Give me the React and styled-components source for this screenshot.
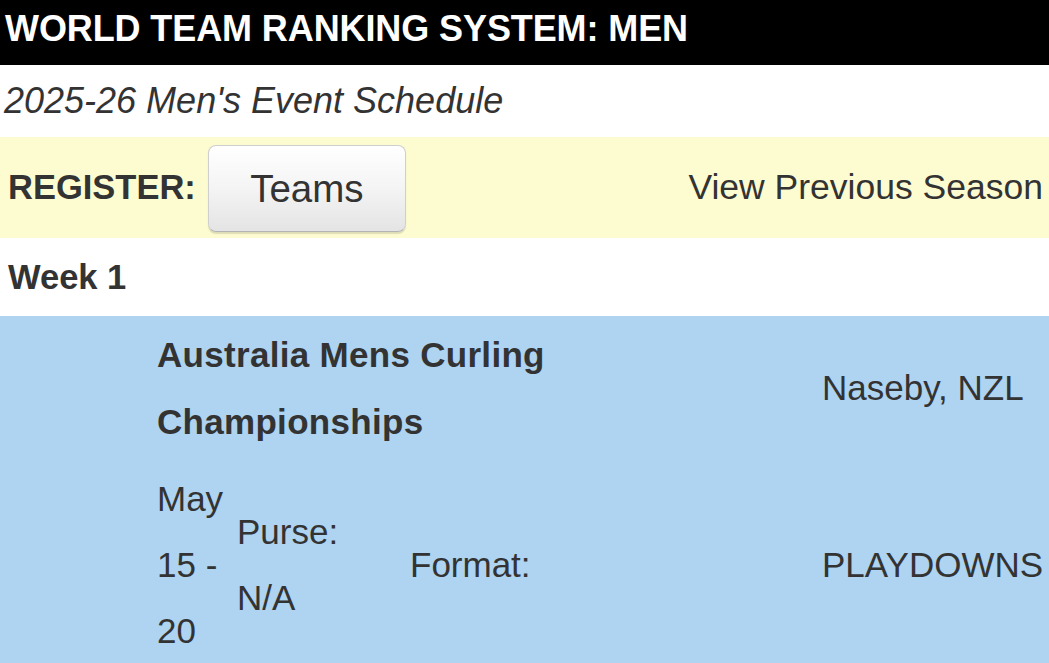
import React from 'react';
import styled, { createGlobalStyle } from 'styled-components';

const GlobalStyle = createGlobalStyle`
  html, body {
    margin: 0;
    padding: 0;
    background: #fff;
    overflow: hidden;
  }
  body {
    font-family: "Liberation Sans", Arial, sans-serif;
    color: #333;
  }
`;

const Page = styled.div`
  width: 1049px;
  height: 663px;
  overflow: hidden;
  display: flex;
  flex-direction: column;
`;

const TitleBar = styled.h1`
  margin: 0;
  height: 65px;
  flex-shrink: 0;
  box-sizing: border-box;
  padding: 11px 5px 0;
  background: #000;
  color: #fff;
  font-size: 36px;
  line-height: 36px;
  font-weight: 700;
  letter-spacing: -0.1px;
`;

const Subtitle = styled.h2`
  margin: 0;
  padding: 15px 4px 15px;
  font-size: 36px;
  line-height: 42px;
  font-weight: 400;
  font-style: italic;
  color: #333;
`;

const RegisterBar = styled.div`
  display: flex;
  align-items: center;
  flex-shrink: 0;
  height: 101px;
  padding: 0 6px 0 8px;
  background: #fdfcd1;
`;

const RegisterLabel = styled.span`
  font-size: 34.5px;
  font-weight: 700;
  color: #333;
`;

const Button = styled.button`
  margin-left: 12px;
  margin-top: 2px;
  width: 198px;
  height: 87px;
  box-sizing: border-box;
  border: 1px solid #cfcfcf;
  border-bottom-color: #b4b4b4;
  border-radius: 8px;
  background: linear-gradient(#ffffff 0%, #f4f4f4 50%, #e4e4e4 100%);
  box-shadow: 0 2px 1px rgba(0, 0, 0, 0.12);
  font-family: inherit;
  font-size: 38.5px;
  color: #333;
  cursor: pointer;
`;

const SideLink = styled.a`
  margin-left: auto;
  font-size: 35.5px;
  color: #333;
  text-decoration: none;
`;

const WeekHeading = styled.h3`
  margin: 0;
  padding: 19px 8px 19px;
  font-size: 34.5px;
  line-height: 40px;
  font-weight: 700;
  color: #333;
`;

const EventBlock = styled.div`
  flex: 1;
  background: #aed4f1;
  padding: 5px 0 0 157px;
  display: grid;
  grid-template-columns: 80px 173px 412px 1fr;
  row-gap: 11px;
  font-size: 35px;
  line-height: 66px;
  color: #333;
`;

const EventName = styled.div`
  grid-column: 1 / 4;
  max-width: 560px;
  font-weight: 700;
  line-height: 67px;
  letter-spacing: 0.3px;
`;

const Cell = styled.div`
  align-self: center;
  white-space: ${(p) => (p.nowrap ? 'nowrap' : 'normal')};
`;

const Line = styled.span`
  display: block;
`;

export default function App() {
  return (
    <Page>
      <GlobalStyle />
      <TitleBar>WORLD TEAM RANKING SYSTEM: MEN</TitleBar>
      <Subtitle>2025-26 Men's Event Schedule</Subtitle>
      <RegisterBar>
        <RegisterLabel>REGISTER:</RegisterLabel>
        <Button type="button">Teams</Button>
        <SideLink href="#">View Previous Season</SideLink>
      </RegisterBar>
      <WeekHeading>Week 1</WeekHeading>
      <EventBlock>
        <EventName>Australia Mens Curling Championships</EventName>
        <Cell nowrap>Naseby, NZL</Cell>
        <Cell>
          <Line>May</Line>
          <Line>15 -</Line>
          <Line>20</Line>
        </Cell>
        <Cell>
          <Line>Purse:</Line>
          <Line>N/A</Line>
        </Cell>
        <Cell>Format:</Cell>
        <Cell nowrap>PLAYDOWNS</Cell>
      </EventBlock>
    </Page>
  );
}
